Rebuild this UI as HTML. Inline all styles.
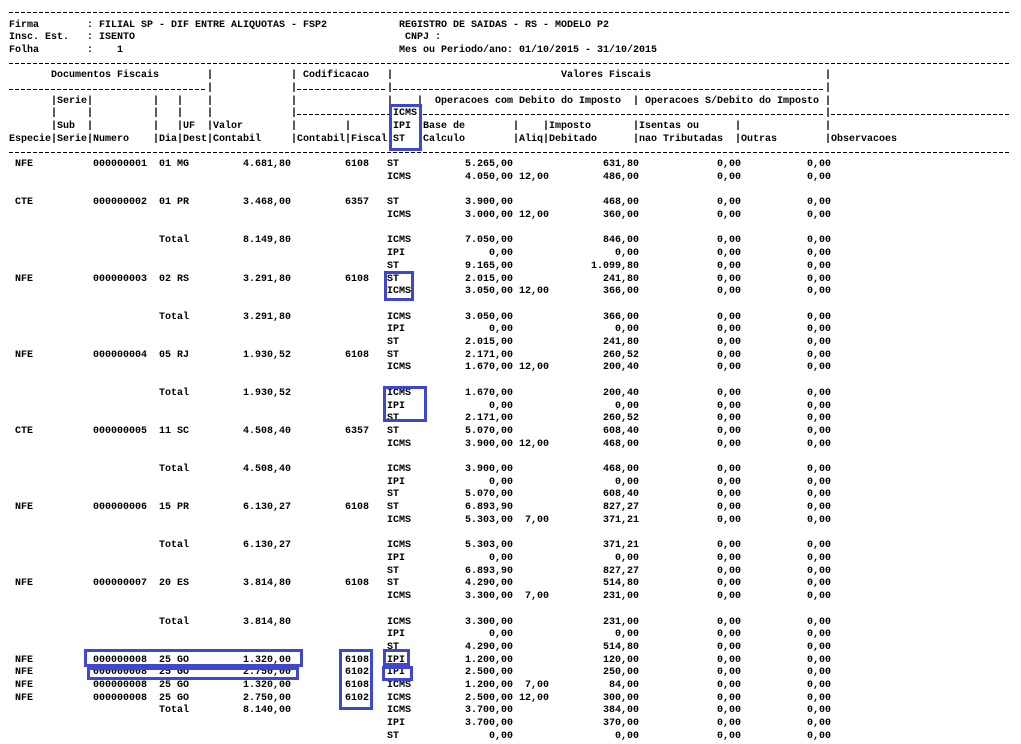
<!DOCTYPE html>
<html><head><meta charset="utf-8"><style>
html,body{margin:0;padding:0;background:#fff;}
body{width:1021px;height:741px;position:relative;overflow:hidden;font-family:"Liberation Mono",monospace;font-size:10px;font-weight:bold;color:#000;}
#w{position:absolute;left:0;top:1.5px;width:1021px;height:741px;}
.t{position:absolute;white-space:pre;line-height:12.7px;height:12.7px;}
.d{position:absolute;height:1px;background:repeating-linear-gradient(90deg,#000 0 4px,transparent 4px 6px);}
pre{position:absolute;margin:0;top:157.7px;font:inherit;line-height:12.7px;}
.r{text-align:right;width:80px;}
.b{position:absolute;border:3px solid #3f48cc;box-sizing:border-box;}
</style></head><body>
<div id="w">
<div class="d" style="left:9px;width:1002px;top:10px"></div>
<div class="t" style="left:9px;top:18px">Firma</div>
<div class="t" style="left:87px;top:18px">: FILIAL SP - DIF ENTRE ALIQUOTAS - FSP2</div>
<div class="t" style="left:399px;top:18px">REGISTRO DE SAIDAS - RS - MODELO P2</div>
<div class="t" style="left:9px;top:30.7px">Insc. Est.</div>
<div class="t" style="left:87px;top:30.7px">: ISENTO</div>
<div class="t" style="left:405px;top:30.7px">CNPJ :</div>
<div class="t" style="left:9px;top:43.4px">Folha</div>
<div class="t" style="left:87px;top:43.4px">:    1</div>
<div class="t" style="left:399px;top:43.4px">Mes ou Periodo/ano: 01/10/2015 - 31/10/2015</div>
<div class="d" style="left:9px;width:1002px;top:61px"></div>
<div class="t" style="left:51px;top:68.8px">Documentos Fiscais</div>
<div class="t" style="left:207px;top:68.8px">|</div>
<div class="t" style="left:291px;top:68.8px">| Codificacao</div>
<div class="t" style="left:387px;top:68.8px">|</div>
<div class="t" style="left:561px;top:68.8px">Valores Fiscais</div>
<div class="t" style="left:825px;top:68.8px">|</div>
<div class="d" style="left:9px;width:198px;top:87px"></div>
<div class="t" style="left:207px;top:81.5px">|</div>
<div class="t" style="left:291px;top:81.5px">|</div>
<div class="d" style="left:297px;width:90px;top:87px"></div>
<div class="t" style="left:387px;top:81.5px">|</div>
<div class="d" style="left:393px;width:432px;top:87px"></div>
<div class="t" style="left:825px;top:81.5px">|</div>
<div class="t" style="left:51px;top:94.2px">|Serie|</div>
<div class="t" style="left:153px;top:94.2px">|</div>
<div class="t" style="left:177px;top:94.2px">|</div>
<div class="t" style="left:207px;top:94.2px">|</div>
<div class="t" style="left:291px;top:94.2px">|</div>
<div class="t" style="left:387px;top:94.2px">|</div>
<div class="t" style="left:417px;top:94.2px">|</div>
<div class="t" style="left:435px;top:94.2px">Operacoes com Debito do Imposto</div>
<div class="t" style="left:633px;top:94.2px">| Operacoes S/Debito do Imposto |</div>
<div class="t" style="left:51px;top:106.9px">|</div>
<div class="t" style="left:87px;top:106.9px">|</div>
<div class="t" style="left:153px;top:106.9px">|</div>
<div class="t" style="left:177px;top:106.9px">|</div>
<div class="t" style="left:207px;top:106.9px">|</div>
<div class="t" style="left:291px;top:106.9px">|</div>
<div class="d" style="left:297px;width:96px;top:112px"></div>
<div class="t" style="left:393px;top:106.9px">ICMS</div>
<div class="d" style="left:423px;width:402px;top:112px"></div>
<div class="t" style="left:825px;top:106.9px">|</div>
<div class="d" style="left:831px;width:180px;top:112px"></div>
<div class="t" style="left:51px;top:119.6px">|Sub</div>
<div class="t" style="left:87px;top:119.6px">|</div>
<div class="t" style="left:153px;top:119.6px">|</div>
<div class="t" style="left:177px;top:119.6px">|UF</div>
<div class="t" style="left:207px;top:119.6px">|Valor</div>
<div class="t" style="left:291px;top:119.6px">|</div>
<div class="t" style="left:345px;top:119.6px">|</div>
<div class="t" style="left:393px;top:119.6px">IPI</div>
<div class="t" style="left:423px;top:119.6px">Base de</div>
<div class="t" style="left:513px;top:119.6px">|</div>
<div class="t" style="left:543px;top:119.6px">|Imposto</div>
<div class="t" style="left:633px;top:119.6px">|Isentas ou</div>
<div class="t" style="left:735px;top:119.6px">|</div>
<div class="t" style="left:825px;top:119.6px">|</div>
<div class="t" style="left:9px;top:132.3px">Especie|Serie|Numero</div>
<div class="t" style="left:153px;top:132.3px">|Dia|Dest|Contabil</div>
<div class="t" style="left:291px;top:132.3px">|Contabil|Fiscal</div>
<div class="t" style="left:393px;top:132.3px">ST</div>
<div class="t" style="left:423px;top:132.3px">Calculo</div>
<div class="t" style="left:513px;top:132.3px">|Aliq|Debitado</div>
<div class="t" style="left:633px;top:132.3px">|nao Tributadas</div>
<div class="t" style="left:735px;top:132.3px">|Outras</div>
<div class="t" style="left:825px;top:132.3px">|Observacoes</div>
<div class="d" style="left:9px;width:1002px;top:150px"></div>

<pre style="left:15px">NFE


CTE





NFE





NFE





CTE





NFE





NFE





NFE
NFE
NFE
NFE</pre>
<pre style="left:93px">000000001


000000002





000000003





000000004





000000005





000000006





000000007





000000008
000000008
000000008
000000008</pre>
<pre style="left:159px">01 MG


01 PR


Total


02 RS


Total


05 RJ


Total


11 SC


Total


15 PR


Total


20 ES


Total


25 GO
25 GO
25 GO
25 GO
Total</pre>
<pre class="r" style="left:211px">4.681,80


3.468,00


8.149,80


3.291,80


3.291,80


1.930,52


1.930,52


4.508,40


4.508,40


6.130,27


6.130,27


3.814,80


3.814,80


1.320,00
2.750,00
1.320,00
2.750,00
8.140,00</pre>
<pre style="left:345px">6108


6357





6108





6108





6357





6108





6108





6108
6102
6108
6102</pre>
<pre style="left:387px">ST
ICMS

ST
ICMS

ICMS
IPI
ST
ST
ICMS

ICMS
IPI
ST
ST
ICMS

ICMS
IPI
ST
ST
ICMS

ICMS
IPI
ST
ST
ICMS

ICMS
IPI
ST
ST
ICMS

ICMS
IPI
ST
IPI
IPI
ICMS
ICMS
ICMS
IPI
ST</pre>
<pre class="r" style="left:433px">5.265,00
4.050,00

3.900,00
3.000,00

7.050,00
0,00
9.165,00
2.015,00
3.050,00

3.050,00
0,00
2.015,00
2.171,00
1.670,00

1.670,00
0,00
2.171,00
5.070,00
3.900,00

3.900,00
0,00
5.070,00
6.893,90
5.303,00

5.303,00
0,00
6.893,90
4.290,00
3.300,00

3.300,00
0,00
4.290,00
1.200,00
2.500,00
1.200,00
2.500,00
3.700,00
3.700,00
0,00</pre>
<pre class="r" style="left:469px"> 
12,00


12,00





12,00





12,00





12,00





7,00





7,00






7,00
12,00</pre>
<pre class="r" style="left:559px">631,80
486,00

468,00
360,00

846,00
0,00
1.099,80
241,80
366,00

366,00
0,00
241,80
260,52
200,40

200,40
0,00
260,52
608,40
468,00

468,00
0,00
608,40
827,27
371,21

371,21
0,00
827,27
514,80
231,00

231,00
0,00
514,80
120,00
250,00
84,00
300,00
384,00
370,00
0,00</pre>
<pre class="r" style="left:661px">0,00
0,00

0,00
0,00

0,00
0,00
0,00
0,00
0,00

0,00
0,00
0,00
0,00
0,00

0,00
0,00
0,00
0,00
0,00

0,00
0,00
0,00
0,00
0,00

0,00
0,00
0,00
0,00
0,00

0,00
0,00
0,00
0,00
0,00
0,00
0,00
0,00
0,00
0,00</pre>
<pre class="r" style="left:751px">0,00
0,00

0,00
0,00

0,00
0,00
0,00
0,00
0,00

0,00
0,00
0,00
0,00
0,00

0,00
0,00
0,00
0,00
0,00

0,00
0,00
0,00
0,00
0,00

0,00
0,00
0,00
0,00
0,00

0,00
0,00
0,00
0,00
0,00
0,00
0,00
0,00
0,00
0,00</pre>
</div>

<div class="b" style="left:389px;top:104px;width:33px;height:47px"></div>
<div class="b" style="left:384px;top:271px;width:30px;height:30px"></div>
<div class="b" style="left:383px;top:386px;width:44px;height:36px"></div>
<div class="b" style="left:84px;top:649px;width:219px;height:18px"></div>
<div class="b" style="left:87px;top:667px;width:212px;height:13px"></div>
<div class="b" style="left:339px;top:649px;width:34px;height:61px"></div>
<div class="b" style="left:383px;top:649px;width:27px;height:17px"></div>
<div class="b" style="left:382px;top:666px;width:31px;height:15px"></div>
</body></html>
